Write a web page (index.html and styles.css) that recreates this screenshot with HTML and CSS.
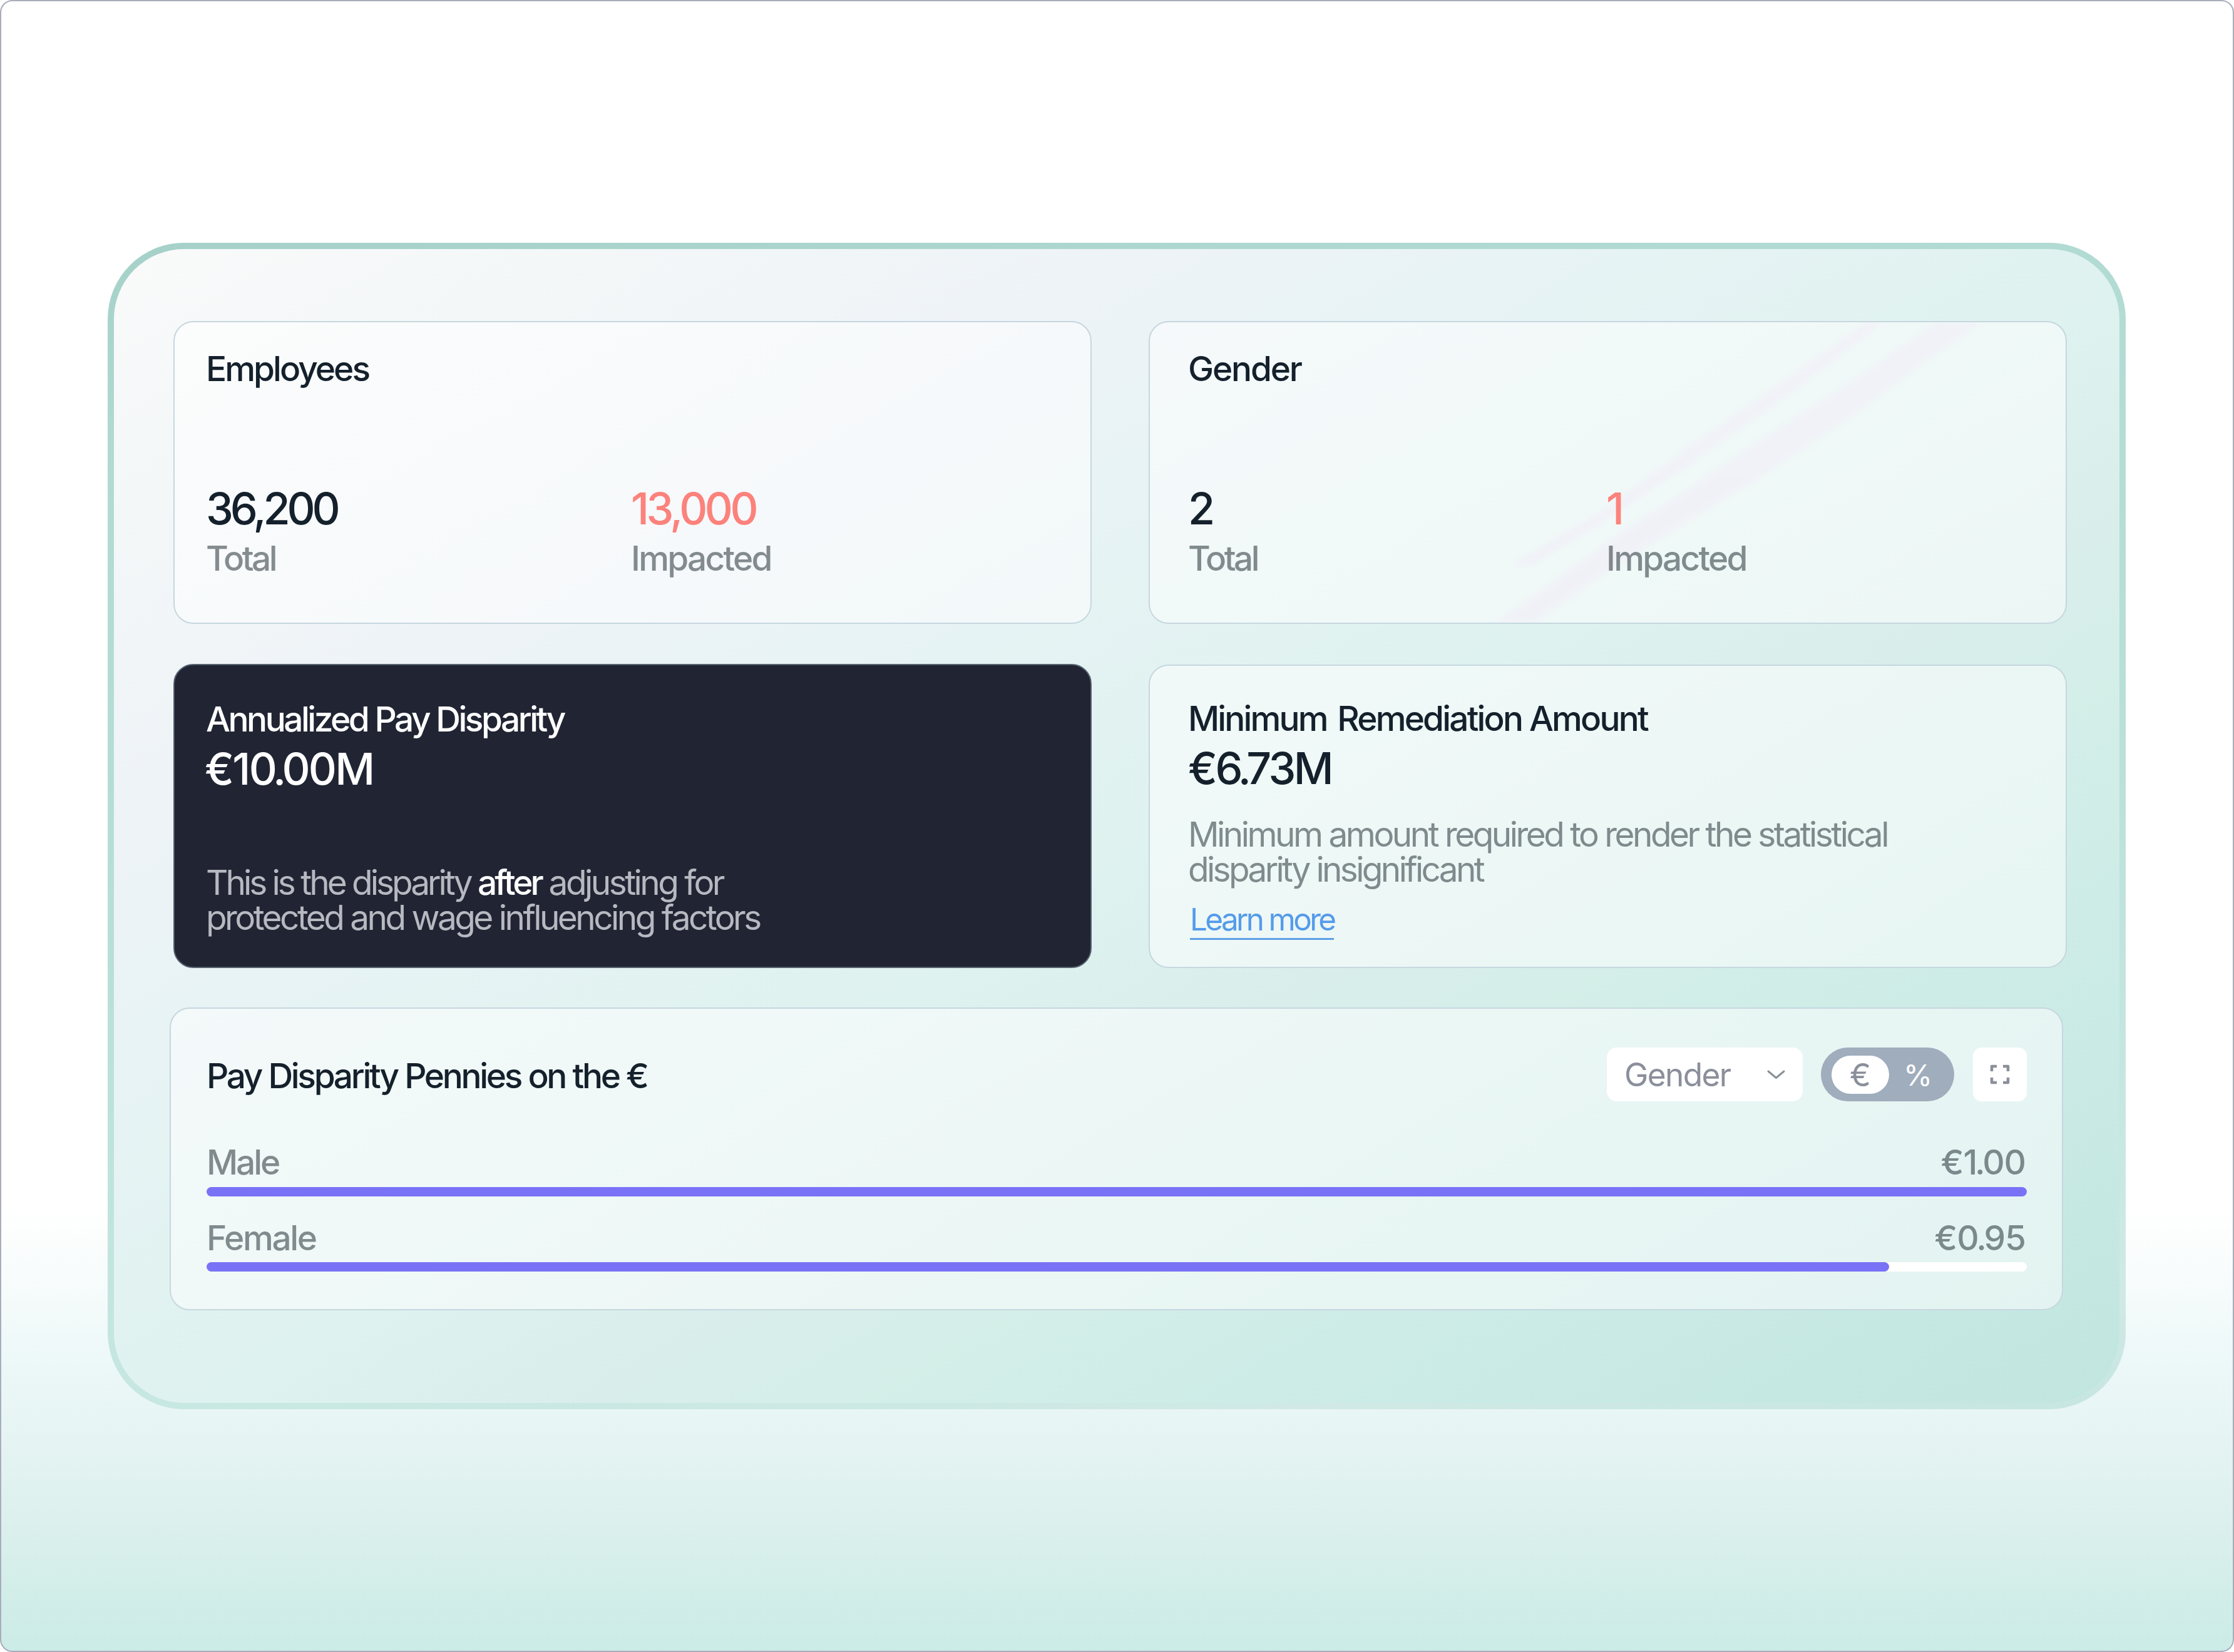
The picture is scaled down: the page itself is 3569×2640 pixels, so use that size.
FILE: index.html
```
<!DOCTYPE html>
<html lang="en">
<head>
<meta charset="utf-8">
<title>Pay Disparity</title>
<link rel="stylesheet" href="styles.css">
</head>
<body>
<div class="frame">
  <main class="panel">
    <div class="cards">
      <section class="card card-stats">
        <h2 class="title title-employees">Employees</h2>
        <div class="stats stats-employees">
          <div class="stat">
            <div class="value value-total">36,200</div>
            <div class="label label-total">Total</div>
          </div>
          <div class="stat">
            <div class="value value-impacted alert">13,000</div>
            <div class="label label-impacted">Impacted</div>
          </div>
        </div>
      </section>

      <section class="card card-stats card-right">
        <svg class="streaks" viewBox="0 0 1463 480" aria-hidden="true">
          <path d="M575 388 L720 302 L865 196 L1000 102 L1150 -4 L1178 -4 L1010 124 L865 226 L715 326 L610 390Z"/>
          <path d="M545 484 L640 416 L748 338 L865 262 L985 182 L1130 88 L1262 -4 L1335 -4 L1240 62 L1125 148 L985 242 L865 316 L748 388 L610 484Z"/>
        </svg>
        <h2 class="title title-gender">Gender</h2>
        <div class="stats stats-gender">
          <div class="stat">
            <div class="value">2</div>
            <div class="label label-total">Total</div>
          </div>
          <div class="stat">
            <div class="value alert">1</div>
            <div class="label label-impacted">Impacted</div>
          </div>
        </div>
      </section>

      <section class="card card-dark">
        <h2 class="title title-annual">Annualized Pay Disparity</h2>
        <div class="value value-annual">€10<span class="dot">.</span>00M</div>
        <p class="note note-dark"><span class="note-lead">This is the disparity <strong>after</strong></span> adjusting for<br>protected and wage influencing factors</p>
      </section>

      <section class="card card-right card-amount">
        <h2 class="title title-minimum">Minimum<span class="wide-space">&nbsp; </span>Remediation Amount</h2>
        <div class="value value-minimum">€6<span class="dot">.</span>73M</div>
        <p class="note">Minimum amount required to render the statistical<br><span class="note-tail">disparity insignificant</span></p>
        <a class="link" href="#">Learn more</a>
      </section>
    </div>

    <section class="card card-bars">
      <header class="bars-head">
        <h2 class="title title-pennies">Pay Disparity Pennies on the €</h2>
        <div class="controls">
          <button class="select">Gender
            <svg width="29" height="15" viewBox="0 0 29 15" aria-hidden="true"><path d="M2 2 L14.5 12.5 L27 2" fill="none" stroke="#8b8f98" stroke-width="3" stroke-linecap="round" stroke-linejoin="round"/></svg>
          </button>
          <div class="toggle">
            <span class="toggle-on">€</span>
            <span class="toggle-off">%</span>
          </div>
          <button class="expand" aria-label="Expand">
            <svg width="32" height="32" viewBox="0 0 32 32" aria-hidden="true"><path d="M3 11 V3 H11 M21 3 H29 V11 M29 21 V29 H21 M11 29 H3 V21" fill="none" stroke="#8b909a" stroke-width="4.6" stroke-linejoin="round"/></svg>
          </button>
        </div>
      </header>
      <div class="row row-male">
        <div class="row-text"><span class="name-male">Male</span><span class="amount">€1<span class="dot">.</span>00</span></div>
        <div class="track"><div class="fill" style="width:100%"></div></div>
      </div>
      <div class="row row-female">
        <div class="row-text"><span class="name-female">Female</span><span class="amount">€0<span class="dot">.</span>95</span></div>
        <div class="track"><div class="fill" style="width:92.45%"></div></div>
      </div>
    </section>
  </main>
</div>
</body>
</html>
```
FILE: styles.css
```
* { box-sizing: border-box; }

body {
  margin: 0;
  background: #fff;
  font-family: Inter, "Liberation Sans", sans-serif;
  color: #14202b;
}

h2, p { margin: 0; font-weight: inherit; }

button {
  border: 0;
  padding: 0;
  font: inherit;
  color: inherit;
}

.frame {
  width: 3569px;
  height: 2640px;
  padding: 386px 171px 0 170px;
  border: 2px solid #a9acbb;
  border-radius: 20px;
  background: linear-gradient(#fff 1930px, #f6fbfb 2060px, #edf8f8 2170px, #e5f4f3 2300px, #dcf0ed 2430px, #d4eee9 2520px, #cbebe7 2640px);
}

.panel {
  height: 1864px;
  padding: 115px 84px 0 89px;
  border: 10px solid transparent;
  border-radius: 122px;
  background:
    linear-gradient(to bottom right, #fafafa 0%, #f3f7f8 12%, #eef3f7 25%, #e5f3f3 40%, #def2ef 52%, #d9eeeb 62%, #d3eee8 70%, #cbebe6 82%, #c1e5df 100%) padding-box,
    linear-gradient(172deg, #a5d1c9 0%, #b0dad2 15%, #b8dfd8 50%, #c8e8e2 82%, #d0e9e5 92%, #c6e6e1 100%) border-box;
}

.cards {
  display: grid;
  grid-template-columns: 1467px 1467px;
  grid-template-rows: 484px 485px;
  gap: 65px 91px;
  margin-left: 6px;
}

.card {
  position: relative;
  overflow: hidden;
  padding: 0 50px;
  border: 2px solid #c6d7df;
  border-radius: 32px;
  background: rgba(255, 255, 255, .52);
}

.card-stats { padding-top: 39px; }
.card-right { padding-left: 61px; }
.card > * { position: relative; }

.card-dark {
  margin-top: -1px;
  padding-top: 51px;
  border-color: #55606f;
  background: #202433;
  color: #fff;
}

.card-amount { padding-top: 49px; }

.card .streaks {
  position: absolute;
  top: 0;
  left: 0;
  width: 1463px;
  height: 480px;
  fill: #f1f0f7;
  opacity: .8;
  filter: blur(5px);
}

.title {
  font-size: 55px;
  font-weight: 500;
  line-height: 70px;
  white-space: nowrap;
}

.title-employees { letter-spacing: -2.98px; }
.title-gender { letter-spacing: -2.2px; }
.title-annual { letter-spacing: -3.5px; }
.title-minimum { letter-spacing: -2.85px; }
.title-pennies { padding-top: 3px; letter-spacing: -3.32px; }
.wide-space { letter-spacing: -6.5px; }

.value {
  font-size: 70px;
  font-weight: 500;
  line-height: 84px;
}

.value-total { letter-spacing: -5.17px; }
.value-impacted { letter-spacing: -4.54px; }
.value-annual { margin-top: 3px; margin-left: -2px; letter-spacing: -2.7px; }
.value-minimum { margin: 3px 0 35px; letter-spacing: -3.6px; }
.dot { margin: 0 -.06em; }
.alert { color: #fc827c; }

.stats { display: grid; margin-top: 147px; }
.stats-employees { grid-template-columns: 679px auto; }
.stats-gender { grid-template-columns: 668px auto; }

.label, .note, .row-text {
  font-size: 55px;
  color: rgba(15, 30, 35, .5);
}

.label { margin-top: 2px; line-height: 70px; font-weight: 450; }
.label-total { letter-spacing: -3.6px; }
.label-impacted { letter-spacing: -2.75px; }

.note {
  line-height: 56px;
  letter-spacing: -3.58px;
  white-space: nowrap;
}

.note-dark { margin-top: 111px; color: #b7b9c1; }
.note-lead { letter-spacing: -4.05px; }
.note-dark strong { font-weight: 500; color: #fff; }
.note-tail { letter-spacing: -3.7px; }

.link {
  display: inline-block;
  margin-top: 22px;
  margin-left: 3px;
  border-bottom: 3px solid #5c9fe6;
  font-size: 49.5px;
  line-height: 60px;
  letter-spacing: -3.7px;
  color: #559bea;
  text-decoration: none;
}

.card-bars {
  width: 3025px;
  height: 484px;
  margin-top: 63px;
  padding: 62px 56px 0 57px;
}

.bars-head {
  display: flex;
  justify-content: space-between;
  align-items: center;
  height: 86px;
}

.controls { display: flex; height: 86px; color: #8b8f9b; }

.select {
  display: flex;
  align-items: center;
  justify-content: space-between;
  width: 313px;
  padding: 0 28px;
  border-radius: 16px;
  background: #fff;
  font-size: 51.5px;
  letter-spacing: -1.74px;
}

.toggle {
  display: flex;
  align-items: center;
  width: 213px;
  margin: 0 30px 0 29px;
  padding-left: 17px;
  border-radius: 43px;
  background: #9fadbc;
}

.toggle-on {
  width: 92px;
  height: 61px;
  border-radius: 31px;
  background: #fff;
  font-size: 51px;
  line-height: 61px;
  text-align: center;
}

.toggle-off {
  width: 92px;
  color: #fff;
  font-size: 47px;
  text-align: center;
}

.expand {
  display: flex;
  align-items: center;
  justify-content: center;
  width: 86px;
  border-radius: 14px;
  background: #fff;
}

.row-male { margin-top: 69px; }
.row-female { margin-top: 38px; }

.row-text {
  display: flex;
  justify-content: space-between;
  height: 56px;
  line-height: 56px;
  font-weight: 450;
}

.name-male { letter-spacing: -3.1px; }
.name-female { letter-spacing: -2.4px; }
.amount { margin-right: 2px; letter-spacing: -1.1px; }

.track {
  height: 15px;
  margin-top: 12px;
  border-radius: 8px;
  background: #fff;
}

.row-female .track { margin-top: 11px; }

.fill {
  height: 15px;
  border-radius: 8px;
  background: #7a72f6;
}
```
